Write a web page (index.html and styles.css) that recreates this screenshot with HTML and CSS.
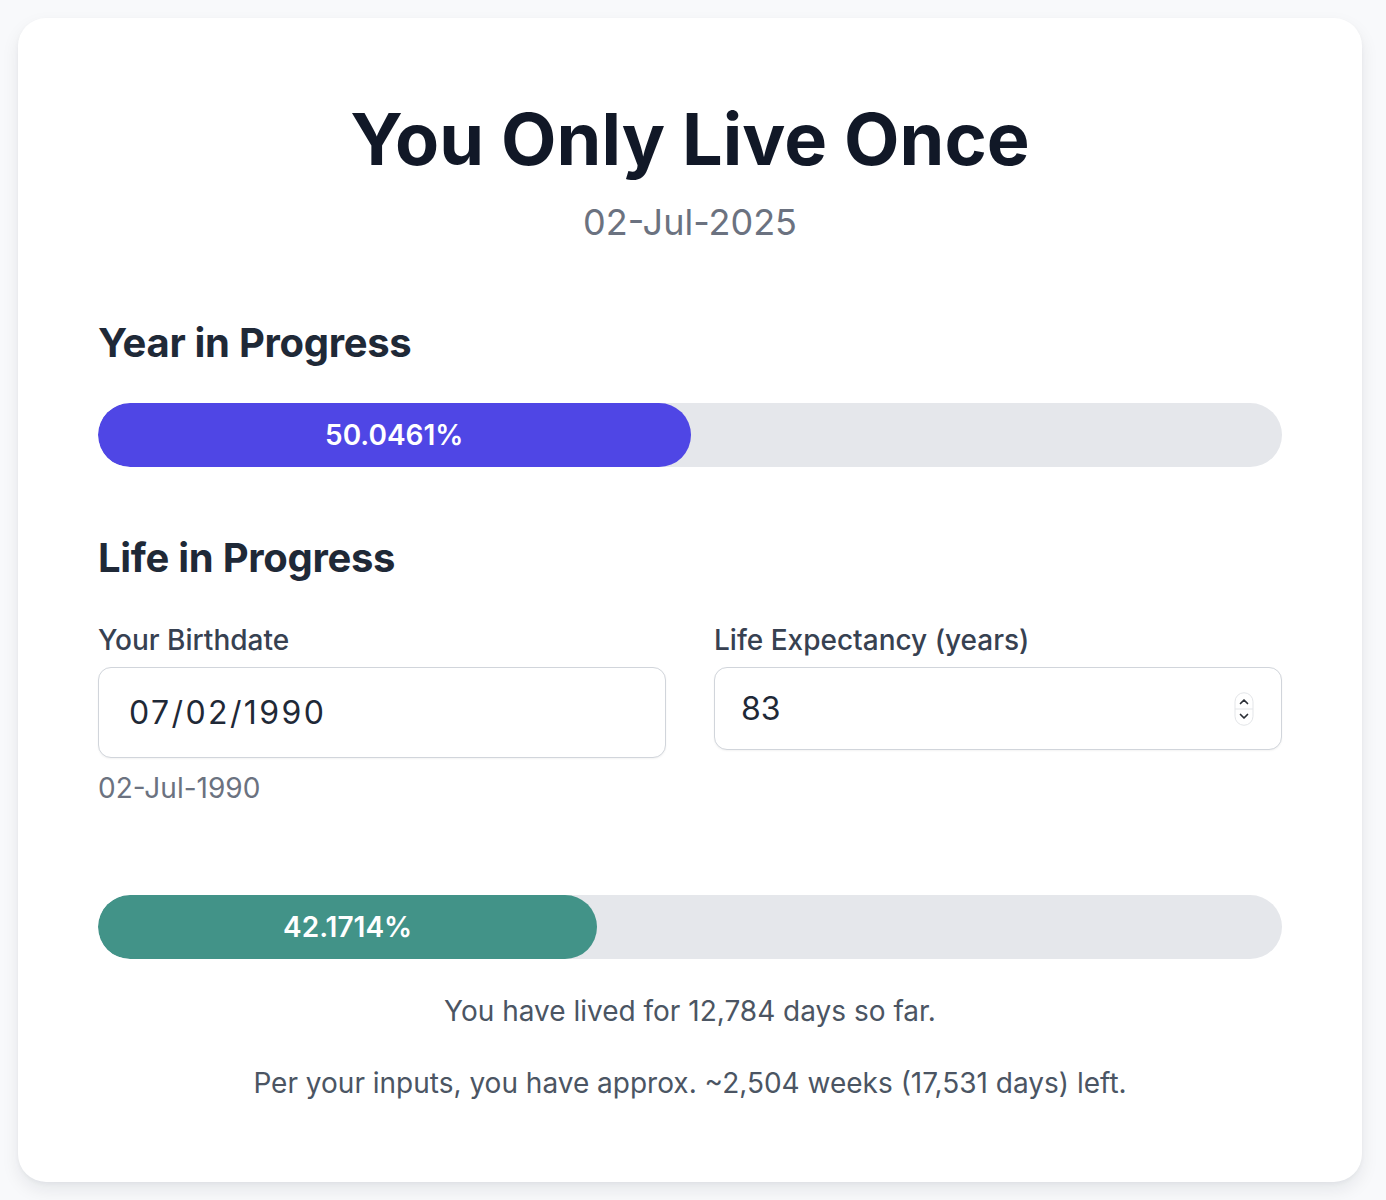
FILE: index.html
```html
<!DOCTYPE html>
<html lang="en">
<head>
<meta charset="utf-8">
<title>You Only Live Once</title>
<link rel="stylesheet" href="styles.css">
</head>
<body>
<main class="card">
  <header class="hero">
    <h1 class="title">You Only Live Once</h1>
    <p class="today">02-Jul-2025</p>
  </header>

  <section class="section year">
    <h2 class="section-title">Year in Progress</h2>
    <div class="bar">
      <div class="bar-fill bar-fill--indigo" style="width: 50.0461%">50.0461%</div>
    </div>
  </section>

  <section class="section life">
    <h2 class="section-title">Life in Progress</h2>
    <div class="fields">
      <div class="field">
        <label class="field-label" for="birth">Your Birthdate</label>
        <input class="input input--date" id="birth" type="text" value="07/02/1990">
        <p class="hint">02-Jul-1990</p>
      </div>
      <div class="field">
        <label class="field-label" for="expect">Life Expectancy (years)</label>
        <div class="number-wrap">
          <input class="input input--number" id="expect" type="text" value="83">
          <svg class="spinner" width="20" height="34" viewBox="0 0 20 34" aria-hidden="true">
            <rect x="1" y="0.75" width="18" height="32.5" rx="9" fill="#fff" stroke="#e3e5e8" stroke-width="1"/>
            <line x1="1" y1="17" x2="19" y2="17" stroke="#e3e5e8" stroke-width="1"/>
            <path d="M6.5 11.5 L10 8 L13.5 11.5" fill="none" stroke="#2b2f36" stroke-width="1.7" stroke-linecap="round" stroke-linejoin="round"/>
            <path d="M6.5 22.5 L10 26 L13.5 22.5" fill="none" stroke="#2b2f36" stroke-width="1.7" stroke-linecap="round" stroke-linejoin="round"/>
          </svg>
        </div>
      </div>
    </div>

    <div class="bar bar--life">
      <div class="bar-fill bar-fill--teal" style="width: 42.1714%">42.1714%</div>
    </div>

    <p class="stat stat--first">You have lived for 12,784 days so far.</p>
    <p class="stat">Per your inputs, you have approx. ~2,504 weeks (17,531 days) left.</p>
  </section>
</main>
</body>
</html>
```

FILE: styles.css
```css
* {
  box-sizing: border-box;
}

html, body {
  margin: 0;
  padding: 0;
}

body {
  background: #f8f9fb;
  font-family: Inter, "Noto Sans", "Liberation Sans", sans-serif;
  padding: 18px 24px 18px 18px;
}

.card {
  background: #ffffff;
  border-radius: 28px;
  box-shadow: 0 8px 18px rgba(17, 24, 39, 0.08), 0 2px 4px rgba(17, 24, 39, 0.04);
  padding: 85px 80px 81px;
  min-height: 1164px;
}

.hero {
  text-align: center;
}

.title {
  margin: 0;
  font-size: 72px;
  line-height: 72px;
  font-weight: 700;
  color: #111827;
}

.today {
  margin: 27px 0 0;
  font-size: 36px;
  line-height: 40px;
  color: #6b7280;
}

.section-title {
  margin: 0;
  font-size: 40px;
  line-height: 40px;
  font-weight: 700;
  color: #1f2937;
  letter-spacing: -0.3px;
}

.year {
  margin-top: 81px;
}

.year .section-title {
  margin-bottom: 40px;
}

.bar {
  height: 64px;
  border-radius: 32px;
  background: #e5e7eb;
  overflow: hidden;
}

.bar-fill {
  height: 100%;
  border-radius: 32px;
  display: flex;
  align-items: center;
  justify-content: center;
  color: #ffffff;
  font-size: 28px;
  font-weight: 600;
}

.bar-fill--indigo {
  background: #4f46e5;
}

.bar-fill--teal {
  background: #429388;
}

.life {
  margin-top: 71px;
}

.fields {
  display: grid;
  grid-template-columns: 1fr 1fr;
  column-gap: 48px;
  margin-top: 46px;
}

.field {
  display: flex;
  flex-direction: column;
}

.field-label {
  font-size: 28px;
  line-height: 32px;
  font-weight: 500;
  color: #374151;
  margin-bottom: 11px;
}

.input {
  width: 100%;
  font-family: Inter, "Noto Sans", "Liberation Sans", sans-serif;
  border: 1.5px solid #d1d5db;
  border-radius: 13px;
  background: #ffffff;
  color: #1f2937;
  box-shadow: 0 1px 2px rgba(0, 0, 0, 0.05);
  outline: none;
}

.input--date {
  height: 91px;
  padding: 0 30px;
  font-size: 32px;
  letter-spacing: 2.4px;
}

.number-wrap {
  position: relative;
}

.input--number {
  height: 83px;
  padding: 0 26px;
  font-size: 32px;
}

.spinner {
  position: absolute;
  right: 28px;
  top: 25px;
}

.hint {
  margin: 12px 0 0;
  font-size: 28px;
  line-height: 36px;
  color: #6b7280;
}

.bar--life {
  margin-top: 89px;
}

.stat {
  margin: 36px 0 0;
  text-align: center;
  font-size: 28px;
  line-height: 36px;
  color: #4b5563;
}

.stat--first {
  margin-top: 34px;
}
```
